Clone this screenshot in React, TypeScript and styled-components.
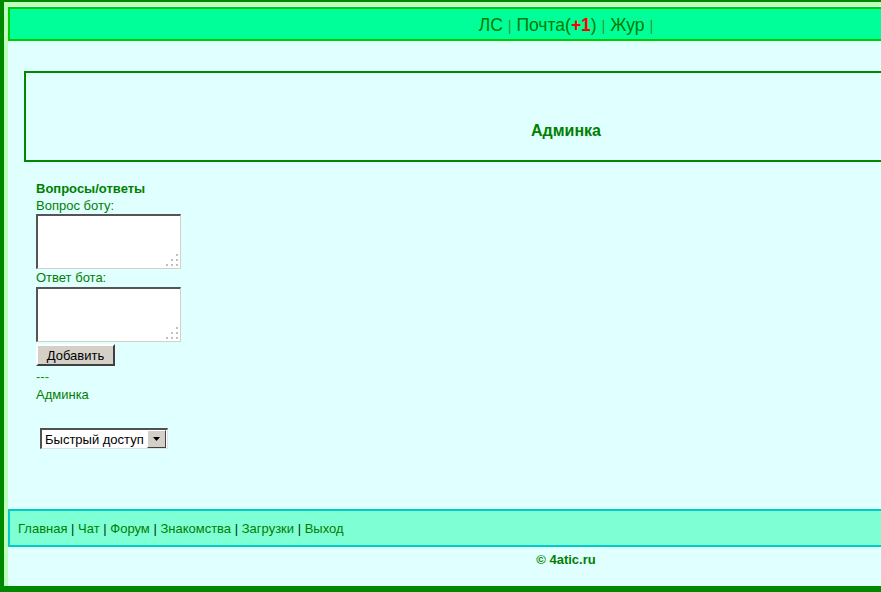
import React from 'react'
import styled, { createGlobalStyle } from 'styled-components'

const GlobalStyle = createGlobalStyle`
  html, body {
    margin: 0;
    padding: 0;
    overflow: hidden;
    background: #e0ffff;
  }
  body {
    font-family: "Liberation Sans", Arial, sans-serif;
    color: #008000;
  }
`

const Frame = styled.div`
  box-sizing: border-box;
  width: 1132px;
  height: 592px;
  border-top: 2px solid #008800;
  border-left: 4px solid #008800;
  border-right: 4px solid #008800;
  border-bottom: 6px solid #008800;
`

const Inner = styled.div`
  box-sizing: border-box;
  height: 100%;
  border-top: 4px solid #bbffbb;
  border-left: 4px solid #bbffbb;
  border-right: 4px solid #bbffbb;
  display: flex;
  flex-direction: column;
`

const TopBar = styled.div`
  margin-top: 1px;
  height: 28px;
  padding-top: 2px;
  box-sizing: content-box;
  line-height: 28px;
  background: #00ff99;
  border: 2px solid #00cc00;
  text-align: center;
  font-size: 17.5px;
  white-space: nowrap;
`

const TopLink = styled.a`
  color: #007a00;
  text-decoration: none;
`

const Sep = styled.span`
  font-size: 15px;
  color: #339933;
`

const Plus = styled.b`
  color: #ff0000;
`

const Logo = styled.div`
  margin: 30px 16px 0;
  height: 87px;
  box-sizing: content-box;
  border: 2px solid #008800;
  display: flex;
  align-items: flex-end;
  justify-content: center;
`

const LogoText = styled.b`
  font-size: 16px;
  line-height: 18px;
  padding-bottom: 20px;
`

const Section = styled.div`
  margin-top: 18px;
  padding-left: 28px;
  font-size: 13px;
  color: #008000;
`

const Title = styled.div`
  font-size: 13px;
  font-weight: bold;
  line-height: 17px;
`

const Label = styled.div`
  line-height: 17px;
`

const Field = styled.div<{ $gap: number }>`
  position: relative;
  width: 145px;
  height: 55px;
  margin-top: ${(p) => p.$gap}px;
`

const Area = styled.textarea`
  display: block;
  box-sizing: border-box;
  width: 100%;
  height: 100%;
  margin: 0;
  background: #fff;
  border-top: 2px solid #555;
  border-left: 2px solid #555;
  border-right: 1px solid #d4d0c8;
  border-bottom: 1px solid #d4d0c8;
  resize: none;
  outline: none;
  font-family: "Liberation Sans", Arial, sans-serif;
  font-size: 12px;
`

const Grip = styled.svg`
  position: absolute;
  right: 2px;
  bottom: 2px;
  width: 14px;
  height: 14px;
  pointer-events: none;
`

const AddButton = styled.button`
  display: block;
  box-sizing: border-box;
  margin-top: 2px;
  width: 79px;
  height: 22px;
  padding: 0;
  background: #d4d0c8;
  border-top: 2px solid #ffffff;
  border-left: 2px solid #ffffff;
  border-right: 2px solid #404040;
  border-bottom: 2px solid #404040;
  font-family: "Liberation Sans", Arial, sans-serif;
  font-size: 13px;
  color: #000;
`

const Lines = styled.div`
  margin-top: 2px;
  line-height: 18px;
`

const Dashes = styled.div`
  color: #00a000;
`

const MenuLink = styled.a`
  color: #008000;
  text-decoration: none;
`

const Quick = styled.div`
  display: flex;
  box-sizing: border-box;
  margin: 24px 0 0 4px;
  width: 128px;
  height: 21px;
  background: #fff;
  border-top: 2px solid #505050;
  border-left: 2px solid #505050;
  border-right: 1px solid #e0e0e0;
  border-bottom: 1px solid #e0e0e0;
`

const QuickSelect = styled.select`
  appearance: none;
  flex: 1;
  min-width: 0;
  border: none;
  background: #fff;
  padding: 0 0 0 3px;
  margin: 0;
  font-family: "Liberation Sans", Arial, sans-serif;
  font-size: 13px;
  color: #000;
  outline: none;
`

const ArrowBox = styled.div`
  box-sizing: border-box;
  width: 19px;
  height: 18px;
  margin-right: 1px;
  background: #d4d0c8;
  border-top: 1px solid #ffffff;
  border-left: 1px solid #ffffff;
  border-right: 1px solid #404040;
  border-bottom: 1px solid #404040;
  display: flex;
  align-items: center;
  justify-content: center;
`

const Footer = styled.div`
  margin-top: 60px;
  height: 34px;
  line-height: 35px;
  background: #7fffd4;
  border: 2px solid #00cccc;
  padding-left: 8px;
  font-size: 13px;
  color: #003300;
  white-space: nowrap;
`

const FootLink = styled.a`
  color: #008000;
  text-decoration: none;
`

const Copy = styled.div`
  margin-top: 5px;
  text-align: center;
  font-size: 13px;
  font-weight: bold;
  line-height: 16px;
  color: #008000;
`

const footerLinks = ['Главная', 'Чат', 'Форум', 'Знакомства', 'Загрузки', 'Выход']

const GripDots = () => (
  <Grip viewBox="0 0 14 14">
    {[
      [10, 0],
      [5, 5],
      [10, 5],
      [0, 10],
      [5, 10],
      [10, 10],
    ].map(([x, y], i) => (
      <rect key={i} x={x + 1} y={y + 1} width="2" height="2" fill="#c0c0c0" />
    ))}
  </Grip>
)

export default function App() {
  return (
    <>
      <GlobalStyle />
      <Frame>
        <Inner>
          <TopBar>
            <TopLink href="#">ЛС</TopLink> <Sep>|</Sep>{' '}
            <TopLink href="#">
              Почта(<Plus>+1</Plus>)
            </TopLink>{' '}
            <Sep>|</Sep> <TopLink href="#">Жур</TopLink> <Sep>|</Sep>
          </TopBar>

          <Logo>
            <LogoText>Админка</LogoText>
          </Logo>

          <Section>
            <Title>Вопросы/ответы</Title>
            <Label>Вопрос боту:</Label>
            <Field $gap={0}>
              <Area />
              <GripDots />
            </Field>
            <Label>Ответ бота:</Label>
            <Field $gap={1}>
              <Area />
              <GripDots />
            </Field>
            <AddButton>Добавить</AddButton>
            <Lines>
              <Dashes>---</Dashes>
              <div>
                <MenuLink href="#">Админка</MenuLink>
              </div>
            </Lines>
            <Quick>
              <QuickSelect defaultValue="">
                <option value="">Быстрый доступ</option>
              </QuickSelect>
              <ArrowBox>
                <svg width="7" height="4" viewBox="0 0 7 4">
                  <path d="M0 0h7L3.5 4z" fill="#000" />
                </svg>
              </ArrowBox>
            </Quick>
          </Section>

          <Footer>
            {footerLinks.map((l, i) => (
              <React.Fragment key={l}>
                {i > 0 && ' | '}
                <FootLink href="#">{l}</FootLink>
              </React.Fragment>
            ))}
          </Footer>

          <Copy>© 4atic.ru</Copy>
        </Inner>
      </Frame>
    </>
  )
}
